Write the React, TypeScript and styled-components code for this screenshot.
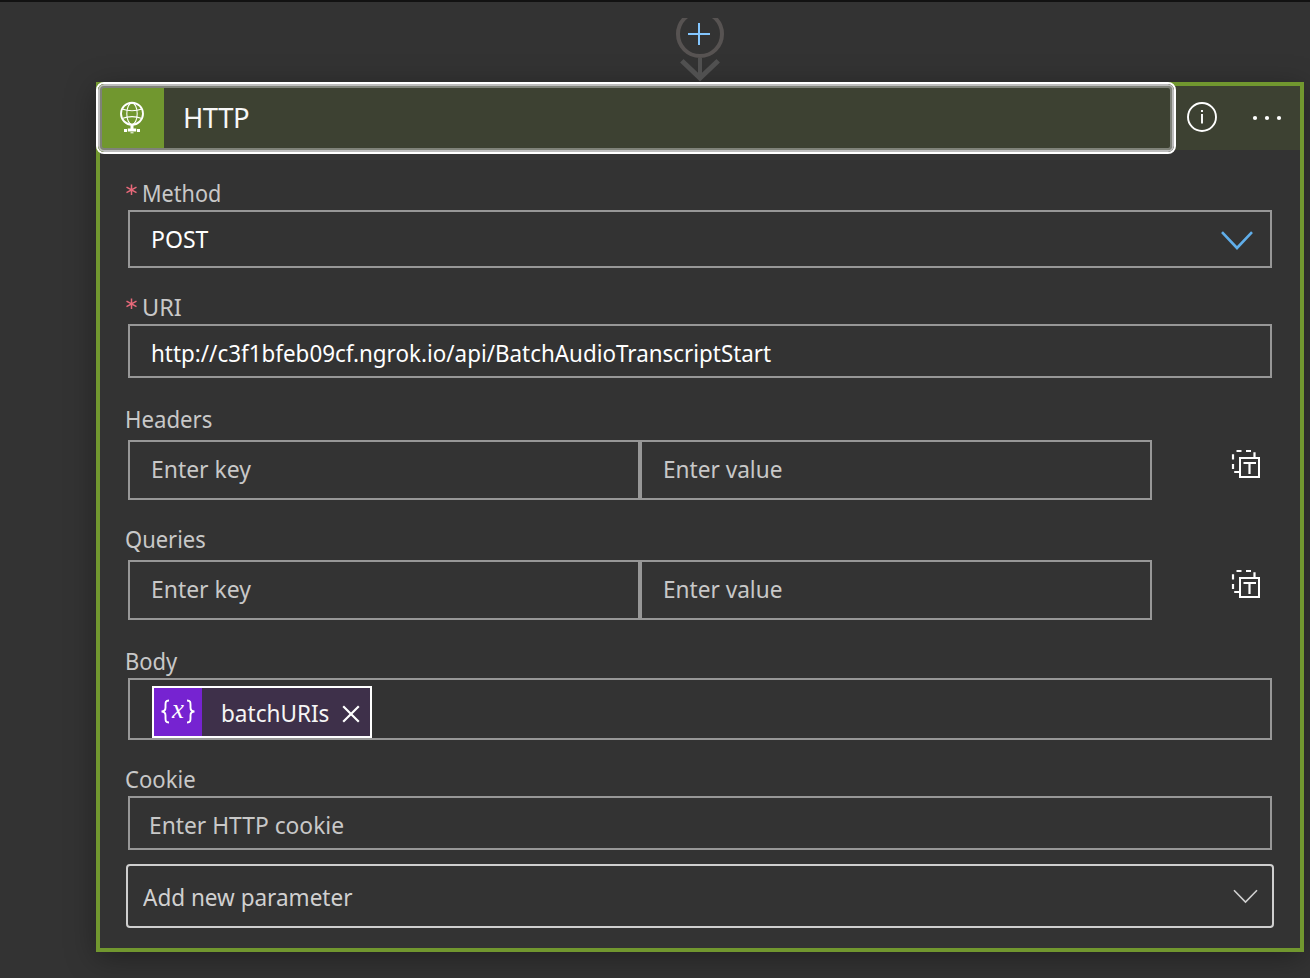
import React from "react";
import styled, { createGlobalStyle } from "styled-components";

const GlobalStyle = createGlobalStyle`
  *, *::before, *::after { box-sizing: border-box; }
  body {
    margin: 0;
    background: #333333;
    font-family: "Noto Sans", "Open Sans", sans-serif;
    font-size: 24px;
    color: #c8c8c8;
    overflow: hidden;
  }
`;

const Canvas = styled.main`
  height: 978px;
  padding: 16px 6px 0 96px;
  border-top: 2px solid #121212;
  background: #333333;
  overflow: hidden;
`;

const Connector = styled.div`
  height: 64px;
  display: flex;
  justify-content: center;
  svg { display: block; overflow: hidden; }
`;

const Card = styled.section`
  height: 870px;
  border: 4px solid #71972f;
  background: #333333;
  box-shadow: 0 6px 28px rgba(0, 0, 0, 0.34);
`;

const Header = styled.header`
  height: 64px;
  display: flex;
  align-items: center;
  background: #3d4132;
`;

const TitleButton = styled.div`
  position: relative;
  width: 1080px;
  height: 72px;
  margin: -4px 0 -4px -4px;
  border: 2px solid #ffffff;
  border-radius: 8px;
  background: #3d4132;
  display: flex;
  flex-shrink: 0;
  overflow: hidden;
  &::after {
    content: "";
    position: absolute;
    inset: 0;
    border: 2px solid #bdbdbd;
    border-radius: 6px;
    box-shadow: inset 0 0 0 2px #7f8279;
  }
`;

const IconTile = styled.div`
  width: 66px;
  display: flex;
  align-items: center;
  justify-content: center;
  padding-left: 2px;
  background: #71972f;
`;

const Title = styled.h1`
  margin: 0;
  padding-left: 19px;
  font-size: 28px;
  font-weight: 400;
  line-height: 67px;
  letter-spacing: -0.5px;
  color: #f7f7f7;
`;

const Condensed = styled.span<{ $scale: number }>`
  display: inline-block;
  white-space: nowrap;
  transform: scaleX(${(p) => p.$scale});
  transform-origin: left center;
`;

const HeaderActions = styled.div`
  flex: 1;
  display: flex;
  align-items: center;
  padding: 0 0 2px 10px;
  gap: 34px;
`;

const Form = styled.div`
  padding: 0 28px;
`;

const Field = styled.div<{ $gap: number }>`
  margin-top: ${(p) => p.$gap}px;
`;

const Label = styled.div<{ $space?: number }>`
  height: 34px;
  line-height: 34px;
  margin: 0 0 ${(p) => p.$space ?? 0}px -3px;
  display: flex;
`;

const Required = styled.span`
  width: 17px;
  flex-shrink: 0;
  svg { display: block; margin: 8px 0 0 1px; }
`;

const Control = styled.div<{ $h: number; $top?: number; $bottom?: number; $bright?: boolean }>`
  height: ${(p) => p.$h}px;
  border: 2px solid #979797;
  padding: ${(p) => p.$top ?? 0}px 17px ${(p) => p.$bottom ?? 0}px 21px;
  display: flex;
  align-items: center;
  justify-content: space-between;
  color: ${(p) => (p.$bright ? "#ffffff" : "#c8c8c8")};
`;

const CookieControl = styled(Control)`
  padding-left: 19px;
`;

const MethodArrow = styled.span`
  padding-top: 5px;
  svg { display: block; }
`;

const PairRow = styled.div`
  display: flex;
  align-items: flex-start;
`;

const PairCell = styled.div`
  width: 512px;
  height: 60px;
  border: 2px solid #979797;
  padding: 0 21px 4px;
  display: flex;
  align-items: center;
`;

const ModeIcon = styled.span`
  margin: 8px 0 0 78px;
  svg { display: block; }
`;

const BodyControl = styled.div`
  height: 62px;
  border: 2px solid #979797;
  padding: 6px 0 0 22px;
`;

const Token = styled.div`
  width: 220px;
  height: 52px;
  border: 2px solid #ffffff;
  background: #3e304a;
  color: #f5f5f5;
  display: flex;
  align-items: center;
`;

const TokenIcon = styled.span`
  width: 48px;
  height: 48px;
  background: #7623d1;
  display: flex;
  align-items: center;
  justify-content: center;
  svg { display: block; }
  text {
    font-family: "Liberation Serif", serif;
    font-style: italic;
    font-size: 27px;
  }
`;

const TokenName = styled.span`
  width: 140px;
  padding: 1px 0 0 19px;
  flex-shrink: 0;
`;

const CloseButton = styled.span`
  padding-top: 3px;
  svg { display: block; }
`;

const ParameterSelect = styled.div`
  height: 64px;
  margin: 14px -2px 0;
  border: 2px solid #cfcfcf;
  border-radius: 4px;
  padding: 0 14.5px 0 15px;
  display: flex;
  align-items: center;
  justify-content: space-between;
  color: #d0d0d0;
`;

const GlobeIcon = () => (
  <svg width="26" height="34" viewBox="0 0 26 34" fill="none" stroke="#fff">
    <circle cx="13" cy="12.700" r="11" strokeWidth="1.900" />
    <ellipse cx="13" cy="12.700" rx="5.200" ry="10.800" strokeWidth="1.100" />
    <path d="M3 8q10 3.600 20 0M3 17.400q10-3.600 20 0" strokeWidth="1.100" />
    <path d="M13 24v4" strokeWidth="3" />
    <path d="M5 29.500h3M8.800 29h8.400M18 29.500h3" strokeWidth="2.900" />
    <path d="M11.500 31.800h3" strokeWidth="1" />
  </svg>
);

const AddConnector = () => (
  <svg width="52" height="64" viewBox="0 0 52 64" fill="none">
    <circle cx="26" cy="16" r="22" stroke="#575352" strokeWidth="4" />
    <path d="M26 40v20" stroke="#505050" strokeWidth="4" />
    <path d="M7.800 42.800L26 60L44.200 42.800" stroke="#505050" strokeWidth="5" />
    <path d="M25 5v22M14 16h22" stroke="#83c6ff" strokeWidth="2" />
  </svg>
);

const InfoIcon = () => (
  <svg width="32" height="32" viewBox="0 0 32 32" fill="none">
    <circle cx="16" cy="16" r="14" stroke="#fff" strokeWidth="1.900" />
    <path d="M16 13v9.500M16 9v2" stroke="#fff" strokeWidth="1.900" />
  </svg>
);

const DotsIcon = () => (
  <svg width="32" height="8" viewBox="0 0 32 8" fill="#fff">
    <circle cx="3" cy="5" r="2.100" />
    <circle cx="15" cy="5" r="2.100" />
    <circle cx="27" cy="5" r="2.100" />
  </svg>
);

const Chevron = ({ w, h, color, stroke }: { w: number; h: number; color: string; stroke: number }) => (
  <svg width={w} height={h} fill="none">
    <path d={`M1 1.200L${w / 2} ${h - 2}L${w - 1} 1.200`} stroke={color} strokeWidth={stroke} />
  </svg>
);

const TextModeIcon = () => (
  <svg width="32" height="32" viewBox="0 0 32 32" fill="none" stroke="#fff" strokeWidth="2">
    <path d="M6.500 3h5M16 3h5M3 6.200v5.300M3 16v5M4.200 24h5M24.500 4.200v5" strokeWidth="2.200" />
    <path d="M10 10h19v19H10z" />
    <path d="M13.500 15h12.500M19.500 15v11" strokeWidth="2.200" />
  </svg>
);

const VariableIcon = () => (
  <svg width="36" height="46" viewBox="0 -10 36 46" fill="none" stroke="#fff" strokeWidth="1.900">
    <path d="M9 1.500C5.500 1.500 5.500 3.500 5.500 6v2.500C5.500 11 4.500 12.500 1.500 12.500c3 0 4 1.500 4 4V19c0 2.500 0 4.500 3.500 4.500" />
    <path d="M27 1.500c3.500 0 3.500 2 3.500 4.500v2.500c0 2.500 1 4 4 4-3 0-4 1.500-4 4V19c0 2.500 0 4.500-3.500 4.500" />
    <text x="18" y="19" textAnchor="middle" fill="#fff" stroke="none">x</text>
  </svg>
);

const CloseIcon = () => (
  <svg width="18" height="18" viewBox="0 0 18 18" stroke="#fff" strokeWidth="2.200">
    <path d="M1.200 1.200l15.600 15.600M16.800 1.200L1.200 16.800" />
  </svg>
);

const RequiredMark = () => (
  <Required>
    <svg width="11" height="12" viewBox="0 0 11 12" stroke="#e8697a" strokeWidth="1.500">
      <path d="M5.500 .5v10.500M.5 3.200l10 5.400M10.500 3.200L.5 8.600" />
    </svg>
  </Required>
);

const KeyValue = () => (
  <PairRow>
    <PairCell><Condensed $scale={0.955}>Enter key</Condensed></PairCell>
    <PairCell><Condensed $scale={0.942}>Enter value</Condensed></PairCell>
    <ModeIcon><TextModeIcon /></ModeIcon>
  </PairRow>
);

export default function App() {
  return (
    <>
      <GlobalStyle />
      <Canvas>
        <Connector><AddConnector /></Connector>
        <Card>
          <Header>
            <TitleButton>
              <IconTile><GlobeIcon /></IconTile>
              <Title><Condensed $scale={0.98}>HTTP</Condensed></Title>
            </TitleButton>
            <HeaderActions>
              <InfoIcon />
              <DotsIcon />
            </HeaderActions>
          </Header>
          <Form>
            <Field $gap={26}>
              <Label><RequiredMark /><Condensed $scale={0.9}>Method</Condensed></Label>
              <Control $h={58} $bottom={2} $bright>
                <Condensed $scale={0.96}>POST</Condensed>
                <MethodArrow><Chevron w={32} h={19} color="#60aeea" stroke={2.6} /></MethodArrow>
              </Control>
            </Field>
            <Field $gap={22}>
              <Label><RequiredMark /><Condensed $scale={0.98}>URI</Condensed></Label>
              <Control $h={54} $top={3} $bright>
                <Condensed $scale={0.933}>http://c3f1bfeb09cf.ngrok.io/api/BatchAudioTranscriptStart</Condensed>
              </Control>
            </Field>
            <Field $gap={24}>
              <Label $space={4}><Condensed $scale={0.925}>Headers</Condensed></Label>
              <KeyValue />
            </Field>
            <Field $gap={22}>
              <Label $space={4}><Condensed $scale={0.915}>Queries</Condensed></Label>
              <KeyValue />
            </Field>
            <Field $gap={24}>
              <Label><Condensed $scale={0.915}>Body</Condensed></Label>
              <BodyControl>
                <Token>
                  <TokenIcon><VariableIcon /></TokenIcon>
                  <TokenName><Condensed $scale={0.94}>batchURIs</Condensed></TokenName>
                  <CloseButton><CloseIcon /></CloseButton>
                </Token>
              </BodyControl>
            </Field>
            <Field $gap={22}>
              <Label><Condensed $scale={0.92}>Cookie</Condensed></Label>
              <CookieControl $h={54} $top={3}><Condensed $scale={0.95}>Enter HTTP cookie</Condensed></CookieControl>
            </Field>
            <ParameterSelect>
              <Condensed $scale={0.938}>Add new parameter</Condensed>
              <Chevron w={25} h={15} color="#d0d0d0" stroke={1.6} />
            </ParameterSelect>
          </Form>
        </Card>
      </Canvas>
    </>
  );
}
